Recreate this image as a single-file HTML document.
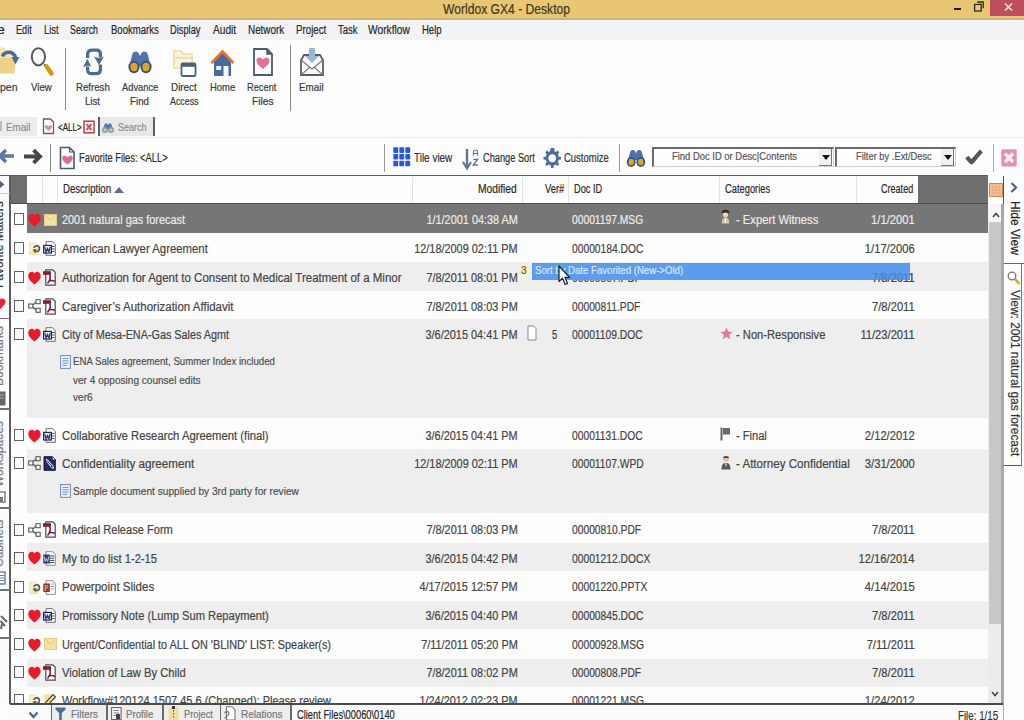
<!DOCTYPE html>
<html><head><meta charset="utf-8">
<title>Worldox GX4 - Desktop</title>
<style>
*{margin:0;padding:0;box-sizing:border-box}
html,body{width:1024px;height:720px;overflow:hidden;background:#fdfdfd;font-family:"Liberation Sans",sans-serif;color:#333}
.a{position:absolute;white-space:nowrap}
svg.a{overflow:visible}
div.a{-webkit-text-stroke:0.2px currentColor}
</style></head><body>
<div class="a" style="left:0px;top:0px;width:1024px;height:19px;background:#e8c673;"></div>
<div class="a" style="left:0px;top:18.4px;width:1024px;height:1.6px;background:#cbb17a;"></div>
<div class="a" style="left:0px;top:20px;width:1024px;height:2.2px;background:#fcf8f0;"></div>
<div class="a" style="left:443.00px;top:2.13px;font-size:14.5px;line-height:14.5px;color:#3f3825;transform:scaleX(0.8353);transform-origin:0 0;">Worldox GX4 - Desktop</div>
<div class="a" style="left:954px;top:8px;width:7px;height:2px;background:#1a1a1a;"></div>
<svg class="a" style="left:973px;top:0px" width="12" height="13" viewBox="0 0 12 13"><rect x="1.6" y="4.4" width="6.6" height="6.6" fill="none" stroke="#2a2a2a" stroke-width="1.3"/><path d="M4.2 2 H10.2 V8.2" fill="none" stroke="#2a2a2a" stroke-width="1.3"/></svg>
<div class="a" style="left:990px;top:0px;width:34px;height:16px;background:#bd4f5e;"></div>
<svg class="a" style="left:1003px;top:2px" width="11" height="10" viewBox="0 0 11 10"><path d="M2 1.5 L9 8.5 M9 1.5 L2 8.5" stroke="#f6e6e8" stroke-width="1.5"/></svg>
<div class="a" style="left:0px;top:22.2px;width:1024px;height:18.3px;background:#f3f3f5;"></div>
<div class="a" style="left:-3.50px;top:23.82px;font-size:12.5px;line-height:12.5px;color:#262626;transform:scaleX(1.1218);transform-origin:0 0;">e</div>
<div class="a" style="left:16.20px;top:23.82px;font-size:12.5px;line-height:12.5px;color:#262626;transform:scaleX(0.7333);transform-origin:0 0;">Edit</div>
<div class="a" style="left:44.00px;top:23.82px;font-size:12.5px;line-height:12.5px;color:#262626;transform:scaleX(0.7505);transform-origin:0 0;">List</div>
<div class="a" style="left:70.20px;top:23.82px;font-size:12.5px;line-height:12.5px;color:#262626;transform:scaleX(0.7069);transform-origin:0 0;">Search</div>
<div class="a" style="left:110.50px;top:23.82px;font-size:12.5px;line-height:12.5px;color:#262626;transform:scaleX(0.7628);transform-origin:0 0;">Bookmarks</div>
<div class="a" style="left:170.30px;top:23.82px;font-size:12.5px;line-height:12.5px;color:#262626;transform:scaleX(0.7439);transform-origin:0 0;">Display</div>
<div class="a" style="left:212.70px;top:23.82px;font-size:12.5px;line-height:12.5px;color:#262626;transform:scaleX(0.8140);transform-origin:0 0;">Audit</div>
<div class="a" style="left:247.60px;top:23.82px;font-size:12.5px;line-height:12.5px;color:#262626;transform:scaleX(0.7896);transform-origin:0 0;">Network</div>
<div class="a" style="left:295.60px;top:23.82px;font-size:12.5px;line-height:12.5px;color:#262626;transform:scaleX(0.7788);transform-origin:0 0;">Project</div>
<div class="a" style="left:337.80px;top:23.82px;font-size:12.5px;line-height:12.5px;color:#262626;transform:scaleX(0.7548);transform-origin:0 0;">Task</div>
<div class="a" style="left:368.10px;top:23.82px;font-size:12.5px;line-height:12.5px;color:#262626;transform:scaleX(0.8188);transform-origin:0 0;">Workflow</div>
<div class="a" style="left:421.70px;top:23.82px;font-size:12.5px;line-height:12.5px;color:#262626;transform:scaleX(0.7601);transform-origin:0 0;">Help</div>
<div class="a" style="left:0px;top:40.5px;width:1024px;height:76px;background:#fdfdfd;"></div>
<div class="a" style="left:65px;top:48px;width:1px;height:62px;background:#8a8a8a;"></div>
<div class="a" style="left:290px;top:45px;width:1px;height:66px;background:#8a8a8a;"></div>
<svg class="a" style="left:0px;top:46px" width="20" height="30" viewBox="0 0 20 30"><path d="M-4 1.5 H4 L6 4 H12 V14 H-4 Z" fill="#f5e2b0"/><path d="M-4 12 H15.5 L14.5 27.5 H-4Z" fill="#efd08a"/><path d="M2.5 10.5 C4 5 14 4 15.5 12" fill="none" stroke="#4a6a9a" stroke-width="3.6"/><path d="M11.5 11 L19.5 11 L15.5 18.5 Z" fill="#4a6a9a"/></svg>
<svg class="a" style="left:28px;top:46px" width="28" height="32" viewBox="0 0 28 32"><ellipse cx="10.4" cy="10.8" rx="6.6" ry="8.6" fill="#fbfbfb" stroke="#5a5a5a" stroke-width="2"/><path d="M16 18.5 L18.2 20" stroke="#5a5a5a" stroke-width="2"/><path d="M18.5 20.5 L23.5 27.5" stroke="#d8950f" stroke-width="4.6" stroke-linecap="round"/></svg>
<svg class="a" style="left:80px;top:48px" width="26" height="28" viewBox="0 0 26 28"><path d="M7.6 10 V6.5 C7.6 3.8 9 2.2 11.5 2.2 H16.5 C19 2.2 20.4 3.8 20.4 6.5 V9.5" fill="none" stroke="#4e6b92" stroke-width="3.3"/><path d="M13.8 8.3 Q19 11.5 24 8.6 L19 17 Z" fill="#4e6b92"/><path d="M20.4 16.5 V21.5 C20.4 24.2 19 25.6 16.5 25.6 H11.5 C9 25.6 7.6 24.2 7.6 21.5 V18.5" fill="none" stroke="#4e6b92" stroke-width="3.3"/><path d="M3 19.5 Q7.3 16.5 11.4 19 L7.3 10.8 Z" fill="#4e6b92"/></svg>
<svg class="a" style="left:127px;top:50px" width="26" height="25" viewBox="0 0 26 25"><path d="M2.5 16 L5 5 C5.5 2.5 7 1.5 9 1.5 C10.5 1.5 11.5 2.5 12 4 L13 6 L14 4 C14.5 2.5 15.5 1.5 17 1.5 C19 1.5 20.5 2.5 21 5 L23.5 16 Z" fill="#5272aa"/><ellipse cx="7" cy="17" rx="5.6" ry="6.2" fill="#3a4e88"/><ellipse cx="19" cy="17" rx="5.6" ry="6.2" fill="#3a4e88"/><ellipse cx="7" cy="17" rx="3.6" ry="4.2" fill="#dca621"/><ellipse cx="19" cy="17" rx="3.6" ry="4.2" fill="#dca621"/></svg>
<svg class="a" style="left:172px;top:50px" width="26" height="28" viewBox="0 0 26 28"><path d="M2 1 H9 L11 4 H20 V18 H2 Z" fill="#fbf4dc" stroke="#eedca0" stroke-width="1.6"/><path d="M3 8 H21" stroke="#e9d9a8" stroke-width="1.5"/><rect x="9.5" y="13.5" width="14" height="12.5" rx="1.2" fill="#fafcff" stroke="#4c5f80" stroke-width="1.8"/><rect x="9.5" y="13.5" width="14" height="3.3" fill="#4c5f80"/></svg>
<svg class="a" style="left:209px;top:49px" width="27" height="29" viewBox="0 0 27 29"><path d="M5 12 L13.5 4 L22 12 V27 H5 Z" fill="#4a6a9e"/><rect x="7.2" y="17" width="5" height="4" fill="#eaf2fb"/><rect x="14.5" y="17" width="5" height="10" fill="#f5f8fb"/><path d="M2.5 14 L13.5 2.5 L24.5 14" fill="none" stroke="#e8742a" stroke-width="2.6"/></svg>
<svg class="a" style="left:252px;top:47px" width="22" height="30" viewBox="0 0 22 30"><path d="M2 2 H15 L20 7 V28 H2 Z" fill="#f9fcff" stroke="#4c5b70" stroke-width="1.8"/><path d="M15 2 V7 H20" fill="#4c5b70" stroke="#4c5b70" stroke-width="1.5"/><path d="M11 22 C6 18 4.5 16 4.5 13.5 C4.5 11 7 10 9 11 C10 11.5 11 12.5 11 12.5 C11 12.5 12 11.5 13 11 C15 10 17.5 11 17.5 13.5 C17.5 16 16 18 11 22Z" fill="#e4718f"/></svg>
<svg class="a" style="left:299px;top:46px" width="26" height="32" viewBox="0 0 26 32"><path d="M2 14 L5 9 H21 L24 14 V29 H2 Z" fill="#fbfbfb" stroke="#5c5c5c" stroke-width="1.8"/><path d="M2 14 L13 23 L24 14" fill="none" stroke="#7a7a7a" stroke-width="1.2"/><path d="M2 29 L11 21 M24 29 L15 21" stroke="#7a7a7a" stroke-width="1.2"/><path d="M10 2 H16 V10 H20 L13 17 L6 10 H10 Z" fill="#93b8dc"/></svg>
<div class="a" style="left:-0.50px;top:81.81px;font-size:10.5px;line-height:10.5px;color:#3a3a3a;transform:scaleX(0.9982);transform-origin:0 0;">pen</div>
<div class="a" style="left:31.40px;top:81.81px;font-size:10.5px;line-height:10.5px;color:#3a3a3a;transform:scaleX(0.9212);transform-origin:0 0;">View</div>
<div class="a" style="left:75.60px;top:81.81px;font-size:10.5px;line-height:10.5px;color:#3a3a3a;transform:scaleX(0.9193);transform-origin:0 0;">Refresh</div>
<div class="a" style="left:84.60px;top:95.81px;font-size:10.5px;line-height:10.5px;color:#3a3a3a;transform:scaleX(0.9178);transform-origin:0 0;">List</div>
<div class="a" style="left:121.80px;top:81.81px;font-size:10.5px;line-height:10.5px;color:#3a3a3a;transform:scaleX(0.8881);transform-origin:0 0;">Advance</div>
<div class="a" style="left:130.00px;top:95.81px;font-size:10.5px;line-height:10.5px;color:#3a3a3a;transform:scaleX(0.9297);transform-origin:0 0;">Find</div>
<div class="a" style="left:170.70px;top:81.81px;font-size:10.5px;line-height:10.5px;color:#3a3a3a;transform:scaleX(0.9409);transform-origin:0 0;">Direct</div>
<div class="a" style="left:169.50px;top:95.81px;font-size:10.5px;line-height:10.5px;color:#3a3a3a;transform:scaleX(0.8421);transform-origin:0 0;">Access</div>
<div class="a" style="left:209.60px;top:81.81px;font-size:10.5px;line-height:10.5px;color:#3a3a3a;transform:scaleX(0.9031);transform-origin:0 0;">Home</div>
<div class="a" style="left:247.20px;top:81.81px;font-size:10.5px;line-height:10.5px;color:#3a3a3a;transform:scaleX(0.8834);transform-origin:0 0;">Recent</div>
<div class="a" style="left:251.70px;top:95.81px;font-size:10.5px;line-height:10.5px;color:#3a3a3a;transform:scaleX(0.9697);transform-origin:0 0;">Files</div>
<div class="a" style="left:299.20px;top:81.81px;font-size:10.5px;line-height:10.5px;color:#3a3a3a;transform:scaleX(0.9366);transform-origin:0 0;">Email</div>
<div class="a" style="left:0px;top:116px;width:1024px;height:22px;background:#fdfdfd;"></div>
<div class="a" style="left:0px;top:117px;width:37px;height:19px;background:#ececec;"></div>
<div class="a" style="left:0px;top:121px;width:2px;height:10px;background:#bbbbbb;"></div>
<div class="a" style="left:5.60px;top:121.51px;font-size:10.5px;line-height:10.5px;color:#8c8c8c;transform:scaleX(0.9290);transform-origin:0 0;">Email</div>
<svg class="a" style="left:42px;top:118px" width="13" height="17" viewBox="0 0 13 17"><path d="M1.5 1 H8.5 L11.5 4 V15.5 H1.5 Z" fill="#fff" stroke="#6b5a64" stroke-width="1.3"/><path d="M6.5 13 C4 11 3 10 3 8.6 C3 7.4 4.2 7 5.2 7.5 L6.5 8.5 L7.8 7.5 C8.8 7 10 7.4 10 8.6 C10 10 9 11 6.5 13Z" fill="#d98aa0"/></svg>
<div class="a" style="left:58.00px;top:121.51px;font-size:10.5px;line-height:10.5px;color:#222;transform:scaleX(0.7657);transform-origin:0 0;">&lt;ALL&gt;</div>
<svg class="a" style="left:83px;top:120px" width="12" height="14" viewBox="0 0 12 14"><rect x="1" y="1.2" width="10" height="11.6" fill="#fff" stroke="#c0444c" stroke-width="1.6"/><path d="M3.5 4 L8.5 10 M8.5 4 L3.5 10" stroke="#d9505a" stroke-width="2"/></svg>
<div class="a" style="left:98px;top:117px;width:1.6px;height:19px;background:#606060;"></div>
<div class="a" style="left:100px;top:117px;width:54px;height:19px;background:#e9e9ec;"></div>
<div class="a" style="left:153px;top:117px;width:1.6px;height:19px;background:#606060;"></div>
<svg class="a" style="left:101px;top:122px" width="14" height="12" viewBox="0 0 14 12"><path d="M2 7 L4 1.5 H6 L7 3 L8 1.5 H10 L12 7Z" fill="#5a76a8"/><circle cx="4" cy="8" r="3" fill="#8a9ab0"/><circle cx="10" cy="8" r="3" fill="#8a9ab0"/><circle cx="4" cy="8" r="1.6" fill="#cfc9a0"/><circle cx="10" cy="8" r="1.6" fill="#cfc9a0"/></svg>
<div class="a" style="left:117.60px;top:121.51px;font-size:10.5px;line-height:10.5px;color:#8c8c8c;transform:scaleX(0.8533);transform-origin:0 0;">Search</div>
<div class="a" style="left:0px;top:138px;width:1024px;height:37px;background:#fdfdfd;"></div>
<div class="a" style="left:0px;top:136.5px;width:1024px;height:1px;background:#e8e8e8;"></div>
<div class="a" style="left:0px;top:175px;width:988px;height:1.6px;background:#5d5d5d;"></div>
<svg class="a" style="left:-1px;top:149px" width="16" height="14" viewBox="0 0 16 14"><path d="M7 1 L1 7 L7 13 M1.5 7 H15" fill="none" stroke="#5b7ba6" stroke-width="3.4"/></svg>
<svg class="a" style="left:23px;top:149px" width="19" height="15" viewBox="0 0 19 15"><path d="M10.5 1.2 L17 7.5 L10.5 13.8 M16 7.5 H1" fill="none" stroke="#454545" stroke-width="3.8"/></svg>
<div class="a" style="left:50px;top:144px;width:1px;height:28px;background:#888;"></div>
<svg class="a" style="left:59px;top:146px" width="17" height="24" viewBox="0 0 17 24"><path d="M1.5 1.5 H10.5 L15 6 V22.5 H1.5 Z" fill="#fbfcff" stroke="#4a5b70" stroke-width="1.6"/><path d="M10.5 1.5 V6 H15" fill="none" stroke="#4a5b70" stroke-width="1.2"/><path d="M8.5 18.5 C4.5 15.5 3.3 14 3.3 12 C3.3 10 5.3 9.3 6.8 10 L8.5 11.2 L10.2 10 C11.7 9.3 13.7 10 13.7 12 C13.7 14 12.5 15.5 8.5 18.5Z" fill="#e26b8e"/></svg>
<div class="a" style="left:79.40px;top:152.04px;font-size:12px;line-height:12px;color:#2c2c2c;transform:scaleX(0.7768);transform-origin:0 0;">Favorite Files: &lt;ALL&gt;</div>
<div class="a" style="left:384px;top:144px;width:1px;height:28px;background:#999;"></div>
<svg class="a" style="left:393px;top:147px" width="18" height="20" viewBox="0 0 18 20"><rect x="0.3" y="0.3" width="4.9" height="5.6" rx="0.8" fill="#2459d8"/><rect x="6.3" y="0.3" width="4.9" height="5.6" rx="0.8" fill="#2459d8"/><rect x="12.3" y="0.3" width="4.9" height="5.6" rx="0.8" fill="#2459d8"/><rect x="0.3" y="7.0" width="4.9" height="5.6" rx="0.8" fill="#2459d8"/><rect x="6.3" y="7.0" width="4.9" height="5.6" rx="0.8" fill="#2459d8"/><rect x="12.3" y="7.0" width="4.9" height="5.6" rx="0.8" fill="#2459d8"/><rect x="0.3" y="13.700000000000001" width="4.9" height="5.6" rx="0.8" fill="#2459d8"/><rect x="6.3" y="13.700000000000001" width="4.9" height="5.6" rx="0.8" fill="#2459d8"/><rect x="12.3" y="13.700000000000001" width="4.9" height="5.6" rx="0.8" fill="#2459d8"/></svg>
<div class="a" style="left:413.50px;top:151.74px;font-size:12px;line-height:12px;color:#333;transform:scaleX(0.8284);transform-origin:0 0;">Tile view</div>
<svg class="a" style="left:462px;top:148px" width="18" height="22" viewBox="0 0 18 22"><path d="M5 1 V18.5" stroke="#5b7696" stroke-width="2.4"/><path d="M1 14 L5 20.5 L9 14" fill="none" stroke="#5b7696" stroke-width="2.2"/><path d="M11.5 7.5 V3.5 C11.5 1.5 15.5 1.5 15.5 3.5 V7.5 M11.5 5.5 H15.5" fill="none" stroke="#5b7696" stroke-width="1.2"/><path d="M11.3 11.5 H15.7 L11.3 17 H15.9" fill="none" stroke="#5b7696" stroke-width="1.3"/></svg>
<div class="a" style="left:482.60px;top:151.84px;font-size:12px;line-height:12px;color:#333;transform:scaleX(0.7701);transform-origin:0 0;">Change Sort</div>
<svg class="a" style="left:543px;top:147px" width="20" height="22" viewBox="0 0 20 22"><g transform="translate(9.5 11)"><path d="M-1.8 -10 H1.8 L2.4 -6.5 L-2.4 -6.5 Z" fill="#4e6c9a"/></g></svg>
<div class="a" style="left:564.40px;top:151.84px;font-size:12px;line-height:12px;color:#333;transform:scaleX(0.7903);transform-origin:0 0;">Customize</div>
<div class="a" style="left:619px;top:144px;width:1px;height:28px;background:#999;"></div>
<svg class="a" style="left:626px;top:149px" width="20" height="19" viewBox="0 0 20 19"><path d="M2 11 L4 3.5 C4.5 1.5 5.5 1 7 1 C8.2 1 9 1.8 9.4 3 L10 4.5 L10.6 3 C11 1.8 11.8 1 13 1 C14.5 1 15.5 1.5 16 3.5 L18 11 Z" fill="#5272aa"/><ellipse cx="5.2" cy="13" rx="4.4" ry="5" fill="#3a4e88"/><ellipse cx="14.8" cy="13" rx="4.4" ry="5" fill="#3a4e88"/><ellipse cx="5.2" cy="13" rx="2.7" ry="3.2" fill="#dca621"/><ellipse cx="14.8" cy="13" rx="2.7" ry="3.2" fill="#dca621"/></svg>
<svg class="a" style="left:543px;top:147px" width="18.5" height="22.5" viewBox="0 0 20 22" preserveAspectRatio="none"><path d="M17.03 9.46 L19.51 9.68 L19.51 12.32 L17.03 12.54 L16.06 14.88 L17.65 16.79 L15.79 18.65 L13.88 17.06 L11.54 18.03 L11.32 20.51 L8.68 20.51 L8.46 18.03 L6.12 17.06 L4.21 18.65 L2.35 16.79 L3.94 14.88 L2.97 12.54 L0.49 12.32 L0.49 9.68 L2.97 9.46 L3.94 7.12 L2.35 5.21 L4.21 3.35 L6.12 4.94 L8.46 3.97 L8.68 1.49 L11.32 1.49 L11.54 3.97 L13.88 4.94 L15.79 3.35 L17.65 5.21 L16.06 7.12Z" fill="#4f6d9b"/><circle cx="10" cy="11" r="4" fill="#fdfdfd"/></svg>
<div class="a" style="left:652px;top:147px;width:182px;height:20px;background:#fdfdfd;border-top:2px solid #6a6a6a;border-left:2px solid #6a6a6a;border-bottom:1px solid #d0d0d0;border-right:1px solid #d0d0d0"></div>
<div class="a" style="left:819px;top:149px;width:13px;height:17px;background:#f0f0f0;border-right:1px solid #777;border-bottom:1px solid #777"></div>
<svg class="a" style="left:822px;top:155px" width="8" height="5" viewBox="0 0 8 5"><path d="M0 0 H8 L4 5Z" fill="#111"/></svg>
<div class="a" style="left:672.30px;top:151.19px;font-size:11px;line-height:11px;color:#555;transform:scaleX(0.8566);transform-origin:0 0;">Find Doc ID or Desc|Contents</div>
<div class="a" style="left:835px;top:147px;width:121px;height:20px;background:#fdfdfd;border-top:2px solid #6a6a6a;border-left:2px solid #6a6a6a;border-bottom:1px solid #d0d0d0;border-right:1px solid #d0d0d0"></div>
<div class="a" style="left:941px;top:149px;width:13px;height:17px;background:#f0f0f0;border-right:1px solid #777;border-bottom:1px solid #777"></div>
<svg class="a" style="left:944px;top:155px" width="8" height="5" viewBox="0 0 8 5"><path d="M0 0 H8 L4 5Z" fill="#111"/></svg>
<div class="a" style="left:855.60px;top:151.19px;font-size:11px;line-height:11px;color:#555;transform:scaleX(0.8493);transform-origin:0 0;">Filter by .Ext/Desc</div>
<svg class="a" style="left:965px;top:148px" width="18" height="18" viewBox="0 0 18 18"><path d="M1.8 9.2 L6.5 14.3 L16.3 2.8" fill="none" stroke="#555" stroke-width="4.2" stroke-linejoin="round"/></svg>
<div class="a" style="left:993px;top:144px;width:1px;height:28px;background:#aaa;"></div>
<svg class="a" style="left:1000.5px;top:149px" width="16" height="18" viewBox="0 0 16 18"><rect x="0.3" y="0.3" width="15.4" height="17.2" rx="1.5" fill="#e48fb2"/><path d="M4 4.5 L12 13 M12 4.5 L4 13" stroke="#fbeaf2" stroke-width="3.4"/></svg>
<div class="a" style="left:0px;top:176px;width:10px;height:528px;background:#fbfbfb;"></div>
<div class="a" style="left:9px;top:176px;width:2.2px;height:528px;background:#5e5e5e;"></div>
<svg class="a" style="left:0px;top:180px" width="6" height="9" viewBox="0 0 6 9"><path d="M-1 0 L4.5 4.5 L-1 9 Z" fill="#56657e"/></svg>
<div class="a" style="left:0px;top:192.5px;width:10px;height:1px;background:#cfcfcf;"></div>
<div class="a" style="left:0px;top:317.75px;width:10px;height:1.5px;background:#707070;"></div>
<div class="a" style="left:0px;top:408.25px;width:10px;height:1.5px;background:#707070;"></div>
<div class="a" style="left:0px;top:507.25px;width:10px;height:1.5px;background:#707070;"></div>
<div class="a" style="left:0px;top:589.25px;width:10px;height:1.5px;background:#707070;"></div>
<div class="a" style="left:0px;top:637.25px;width:10px;height:1.5px;background:#707070;"></div>
<div class="a" style="left:-6.7px;top:288px;transform:rotate(-90deg);transform-origin:0 0;font-size:12px;line-height:12px;color:#333">Favorite Matters</div>
<div class="a" style="left:-6.7px;top:386px;transform:rotate(-90deg);transform-origin:0 0;font-size:12px;line-height:12px;color:#7a7a7a">Bookmarks</div>
<div class="a" style="left:-6.7px;top:487px;transform:rotate(-90deg);transform-origin:0 0;font-size:12px;line-height:12px;color:#7a7a7a">Workspaces</div>
<div class="a" style="left:-6.7px;top:567px;transform:rotate(-90deg);transform-origin:0 0;font-size:12px;line-height:12px;color:#7a7a7a">Cabinets</div>
<svg class="a" style="left:0px;top:297px" width="6" height="13" viewBox="0 0 6 13"><path d="M0 12.5 C-3 9 -5 7 -5 4.5 C-5 2 -3 1 -1 1.5 L0 2.5 L1 1.5 C3 1 5.5 2 5.5 4.5 C5.5 7 3 9 0 12.5Z" fill="#e8203a"/></svg>
<svg class="a" style="left:0px;top:391px" width="7" height="15" viewBox="0 0 7 15"><rect x="-2" y="0.5" width="7.5" height="14" fill="#666"/><path d="M-1 4 H4 M-1 7 H4" stroke="#aaa" stroke-width="1"/></svg>
<svg class="a" style="left:0px;top:491px" width="7" height="12" viewBox="0 0 7 12"><rect x="-2" y="1" width="7" height="10" fill="#fff" stroke="#777" stroke-width="1.4"/><rect x="-2" y="6" width="5" height="5" fill="#777"/></svg>
<svg class="a" style="left:0px;top:571px" width="7" height="14" viewBox="0 0 7 14"><rect x="-2" y="1" width="7" height="12" fill="#fff" stroke="#6a7aa0" stroke-width="1.4"/><path d="M-1 4.5 H4 M-1 7 H4 M-1 9.5 H4" stroke="#6a7aa0" stroke-width="1"/></svg>
<svg class="a" style="left:0px;top:614px" width="9" height="17" viewBox="0 0 9 17"><path d="M1 2 L7 8 M0.5 7 L5 12 M2 10 L1 15" stroke="#666" stroke-width="2"/></svg>
<div class="a" style="left:11px;top:176px;width:977px;height:28px;background:#fdfdfd;"></div>
<div class="a" style="left:11px;top:176px;width:16px;height:28px;background:#6e6e6e;"></div>
<div class="a" style="left:918px;top:176px;width:70px;height:28px;background:#6e6e6e;"></div>
<div class="a" style="left:42px;top:177px;width:1px;height:26px;background:#e2e2e2;"></div>
<div class="a" style="left:57px;top:177px;width:1px;height:26px;background:#e2e2e2;"></div>
<div class="a" style="left:412px;top:177px;width:1px;height:26px;background:#e2e2e2;"></div>
<div class="a" style="left:521.5px;top:177px;width:1px;height:26px;background:#e2e2e2;"></div>
<div class="a" style="left:568px;top:177px;width:1px;height:26px;background:#e2e2e2;"></div>
<div class="a" style="left:719px;top:177px;width:1px;height:26px;background:#e2e2e2;"></div>
<div class="a" style="left:856px;top:177px;width:1px;height:26px;background:#e2e2e2;"></div>
<div class="a" style="left:11px;top:202.5px;width:977px;height:1.5px;background:#4e4e4e;"></div>
<div class="a" style="left:63.20px;top:183.14px;font-size:12px;line-height:12px;color:#2a2a2a;transform:scaleX(0.7996);transform-origin:0 0;">Description</div>
<svg class="a" style="left:114px;top:187px" width="10" height="6" viewBox="0 0 10 6"><path d="M0 6 L5 0 L10 6Z" fill="#5a7092"/></svg>
<div class="a" style="left:477.50px;top:183.14px;font-size:12px;line-height:12px;color:#2a2a2a;transform:scaleX(0.8543);transform-origin:0 0;">Modified</div>
<div class="a" style="left:545.20px;top:183.14px;font-size:12px;line-height:12px;color:#2a2a2a;transform:scaleX(0.7777);transform-origin:0 0;">Ver#</div>
<div class="a" style="left:574.00px;top:183.14px;font-size:12px;line-height:12px;color:#2a2a2a;transform:scaleX(0.7687);transform-origin:0 0;">Doc ID</div>
<div class="a" style="left:724.60px;top:183.14px;font-size:12px;line-height:12px;color:#2a2a2a;transform:scaleX(0.7772);transform-origin:0 0;">Categories</div>
<div class="a" style="left:880.80px;top:183.14px;font-size:12px;line-height:12px;color:#2a2a2a;transform:scaleX(0.7540);transform-origin:0 0;">Created</div>
<svg class="a" style="left:989px;top:183px" width="14" height="14" viewBox="0 0 14 14"><rect x="0.5" y="0.5" width="13" height="13" fill="#f4c49a" stroke="#c98a55" stroke-width="1"/><path d="M4 1 V13" stroke="#e8a070" stroke-width="0.7"/><path d="M7 1 V13" stroke="#e8a070" stroke-width="0.7"/><path d="M10 1 V13" stroke="#e8a070" stroke-width="0.7"/><path d="M1 4 H13" stroke="#e8a070" stroke-width="0.7"/><path d="M1 7 H13" stroke="#e8a070" stroke-width="0.7"/><path d="M1 10 H13" stroke="#e8a070" stroke-width="0.7"/></svg>
<div class="a" style="left:1003px;top:176px;width:1px;height:28px;background:#555;"></div>
<svg width="0" height="0" style="position:absolute"><defs>
<symbol id="heart" viewBox="0 0 13 14"><path d="M6.5 13.5 C2 10 0.3 7.8 0.3 5 C0.3 2.2 2.2 0.8 4 0.8 C5.2 0.8 6 1.5 6.5 2.4 C7 1.5 7.8 0.8 9 0.8 C10.8 0.8 12.7 2.2 12.7 5 C12.7 7.8 11 10 6.5 13.5Z" fill="#e61c2e"/></symbol>
<symbol id="env" viewBox="0 0 13 12"><rect x="0.5" y="0.5" width="12" height="11" fill="#f3e2a4" stroke="#e2cc86" stroke-width="1"/><path d="M0.8 1 L6.5 6.5 L12.2 1" fill="none" stroke="#d9c07a" stroke-width="0.9"/></symbol>
<symbol id="word" viewBox="0 0 13 15"><path d="M3 0.7 H9.5 L12.3 3.5 V14.3 H3 Z" fill="#fff" stroke="#6a6a6a" stroke-width="1"/><path d="M9 5.5 H11.5 M9 8 H11.5 M9 10.5 H11.5" stroke="#555" stroke-width="1.1"/><rect x="0.6" y="4.4" width="7.8" height="7.6" fill="#eef1fa" stroke="#1e2750" stroke-width="1.2"/><path d="M1.8 5.8 L3 10.8 L4.5 7.5 L6 10.8 L7.2 5.8" fill="none" stroke="#26367a" stroke-width="1.3"/></symbol>
<symbol id="pdf" viewBox="0 0 13 17"><path d="M2.8 0.9 H9.8 L12.2 3.3 V16.1 H2.8 Z" fill="#fff" stroke="#4a4a4a" stroke-width="1.2"/><rect x="0" y="2.2" width="8" height="3.6" fill="#861c3c"/><path d="M6.5 5.5 C8.5 8.5 7 11 4.5 14.5 M5.5 12.5 C8 11 10 11.5 12 12.5" fill="none" stroke="#7c1a38" stroke-width="1.5"/></symbol>
<symbol id="share" viewBox="0 0 13 14"><rect x="0.7" y="5" width="4.2" height="4" fill="#fff" stroke="#5a5a5a" stroke-width="1.1"/><rect x="8" y="0.7" width="4.2" height="4" fill="#fff" stroke="#5a5a5a" stroke-width="1.1"/><rect x="8" y="9.3" width="4.2" height="4" fill="#fff" stroke="#5a5a5a" stroke-width="1.1"/><path d="M4.9 6 L8 3 M4.9 8 L8 11" fill="none" stroke="#5a5a5a" stroke-width="1.1"/></symbol>
<symbol id="chk" viewBox="0 0 12 13"><path d="M0.8 1 H6.5 L9 3.5 V12.5 H0.8 Z" fill="#faf0cc" stroke="#efe0b0" stroke-width="1"/><path d="M3 8.5 L4 11.5 L6.5 12 L7 9" fill="#e8d490"/><path d="M5 6 C5 3 10.5 3 10.5 6.5 C10.5 9.5 7.5 10 6 9" fill="none" stroke="#555" stroke-width="1.6"/><path d="M3.5 7.5 L6.5 11 L7.5 7Z" fill="#555"/></symbol>
<symbol id="wpd" viewBox="0 0 13 15"><path d="M1 0.7 H9.5 L12.3 3.5 V14.3 H1 Z" fill="#232c5c" stroke="#151a3a" stroke-width="1"/><path d="M9.6 0.9 V3.4 H12.1 Z" fill="#e8eaf4"/><path d="M2.5 2.5 L5 3.8 L10.5 10 L11 13 L8.2 12 L3.5 5.5 Z" fill="#dde2f0"/><path d="M4 4.5 L9.5 11" stroke="#232c5c" stroke-width="1"/><circle cx="8.6" cy="10.6" r="0.9" fill="#232c5c"/></symbol>
<symbol id="docx" viewBox="0 0 13 15"><path d="M3 0.7 H9.5 L12.3 3.5 V14.3 H3 Z" fill="#fff" stroke="#8a8a8a" stroke-width="1"/><path d="M6.5 5 H11.3 M6.5 7.2 H11.3 M6.5 9.4 H11.3 M6.5 11.6 H11.3" stroke="#444" stroke-width="1"/><rect x="0.3" y="3.5" width="6.5" height="9" fill="#2c3e70"/><path d="M1.2 5.5 L2.3 10.5 L3.5 7.5 L4.7 10.5 L5.8 5.5" fill="none" stroke="#c8d8f0" stroke-width="0.9"/></symbol>
<symbol id="pptx" viewBox="0 0 13 15"><path d="M3 0.7 H9.5 L12.3 3.5 V14.3 H3 Z" fill="#fff" stroke="#8a8a8a" stroke-width="1"/><path d="M8 4 H11 M8 6.5 H11 M8 9 H11" stroke="#999" stroke-width="1"/><rect x="0.3" y="3.5" width="6.5" height="8.5" fill="#9a3420"/><path d="M2.3 11 V5.5 H3.8 C5.2 5.5 5.2 8.2 3.8 8.2 H2.3" fill="none" stroke="#f0b8a0" stroke-width="1"/></symbol>
<symbol id="pencil" viewBox="0 0 13 14"><path d="M0.8 1 H8 V13 H0.8Z" fill="#f5e5b0"/><path d="M2 13 L3 9 L10 1.5 L12.5 4 L5.5 11.5 Z" fill="#f1dd9a" stroke="#444" stroke-width="1.2"/></symbol>
<symbol id="pagesm" viewBox="0 0 10 16"><path d="M1 1 H6.5 L9 3.5 V15 H1 Z" fill="#fff" stroke="#888" stroke-width="1"/></symbol>
<symbol id="notes" viewBox="0 0 11 14"><rect x="0.6" y="0.6" width="9.8" height="12.8" fill="#eef3fb" stroke="#6a8cc0" stroke-width="1"/><path d="M2.5 3.5 H8.5 M2.5 5.8 H8.5 M2.5 8.1 H8.5 M2.5 10.4 H7" stroke="#6a8cc0" stroke-width="0.9"/></symbol>
</defs></svg>
<div class="a" style="left:27px;top:204.3px;width:961px;height:28.899999999999977px;background:#767676;"></div>
<div class="a" style="left:27px;top:233.2px;width:961px;height:28.30000000000001px;background:#fdfdfd;"></div>
<div class="a" style="left:27px;top:261.5px;width:961px;height:29.0px;background:#eeeeee;"></div>
<div class="a" style="left:27px;top:290.5px;width:961px;height:28.5px;background:#fdfdfd;"></div>
<div class="a" style="left:27px;top:319px;width:961px;height:99.39999999999998px;background:#eeeeee;"></div>
<div class="a" style="left:27px;top:418.4px;width:961px;height:31.0px;background:#fdfdfd;"></div>
<div class="a" style="left:27px;top:449.4px;width:961px;height:63.700000000000045px;background:#eeeeee;"></div>
<div class="a" style="left:27px;top:513.1px;width:961px;height:29.899999999999977px;background:#fdfdfd;"></div>
<div class="a" style="left:27px;top:543px;width:961px;height:28.200000000000045px;background:#eeeeee;"></div>
<div class="a" style="left:27px;top:571.2px;width:961px;height:30.0px;background:#fdfdfd;"></div>
<div class="a" style="left:27px;top:601.2px;width:961px;height:28.199999999999932px;background:#eeeeee;"></div>
<div class="a" style="left:27px;top:629.4px;width:961px;height:29.899999999999977px;background:#fdfdfd;"></div>
<div class="a" style="left:27px;top:659.3px;width:961px;height:28.200000000000045px;background:#eeeeee;"></div>
<div class="a" style="left:27px;top:687.5px;width:961px;height:16.5px;background:#fdfdfd;"></div>
<div class="a" style="left:14px;top:213.4px;width:10px;height:12px;background:#fff;border:1.1px solid #626262"></div>
<svg class="a" style="left:28px;top:212.9px" width="13" height="14"><use href="#heart"/></svg>
<svg class="a" style="left:44px;top:213.70000000000002px" width="13" height="12"><use href="#env"/></svg>
<div class="a" style="left:61.50px;top:214.12px;font-size:12.5px;line-height:12.5px;color:#ececec;transform:scaleX(0.8719);transform-origin:0 0;">2001 natural gas forecast</div>
<div class="a" style="left:413.05px;top:214.12px;font-size:12.5px;line-height:12.5px;color:#ececec;transform:scaleX(0.8720);transform-origin:100% 0;">1/1/2001 04:38 AM</div>
<div class="a" style="left:572.30px;top:214.12px;font-size:12.5px;line-height:12.5px;color:#ececec;transform:scaleX(0.8220);transform-origin:0 0;">00001197.MSG</div>
<div class="a" style="left:736.20px;top:214.12px;font-size:12.5px;line-height:12.5px;color:#ececec;transform:scaleX(0.8976);transform-origin:0 0;">- Expert Witness</div>
<div class="a" style="left:865.83px;top:214.12px;font-size:12.5px;line-height:12.5px;color:#ececec;transform:scaleX(0.8950);transform-origin:100% 0;">1/1/2001</div>
<div class="a" style="left:14px;top:242.4px;width:10px;height:12px;background:#fff;border:1.1px solid #626262"></div>
<svg class="a" style="left:29px;top:242.20000000000002px" width="12" height="13"><use href="#chk"/></svg>
<svg class="a" style="left:43px;top:241.20000000000002px" width="13" height="15"><use href="#word"/></svg>
<div class="a" style="left:61.50px;top:243.12px;font-size:12.5px;line-height:12.5px;color:#444;transform:scaleX(0.9084);transform-origin:0 0;">American Lawyer Agreement</div>
<div class="a" style="left:399.38px;top:243.12px;font-size:12.5px;line-height:12.5px;color:#444;transform:scaleX(0.8720);transform-origin:100% 0;">12/18/2009 02:11 PM</div>
<div class="a" style="left:572.30px;top:243.12px;font-size:12.5px;line-height:12.5px;color:#444;transform:scaleX(0.8220);transform-origin:0 0;">00000184.DOC</div>
<div class="a" style="left:858.89px;top:243.12px;font-size:12.5px;line-height:12.5px;color:#444;transform:scaleX(0.8950);transform-origin:100% 0;">1/17/2006</div>
<div class="a" style="left:14px;top:271.09999999999997px;width:10px;height:12px;background:#fff;border:1.1px solid #626262"></div>
<svg class="a" style="left:28px;top:270.59999999999997px" width="13" height="14"><use href="#heart"/></svg>
<svg class="a" style="left:43px;top:268.9px" width="13" height="17"><use href="#pdf"/></svg>
<div class="a" style="left:61.50px;top:271.82px;font-size:12.5px;line-height:12.5px;color:#444;transform:scaleX(0.9184);transform-origin:0 0;">Authorization for Agent to Consent to Medical Treatment of a Minor</div>
<div class="a" style="left:413.28px;top:271.82px;font-size:12.5px;line-height:12.5px;color:#444;transform:scaleX(0.8720);transform-origin:100% 0;">7/8/2011 08:01 PM</div>
<div class="a" style="left:572.30px;top:271.82px;font-size:12.5px;line-height:12.5px;color:#444;transform:scaleX(0.8220);transform-origin:0 0;">00000807.PDF</div>
<div class="a" style="left:866.77px;top:271.82px;font-size:12.5px;line-height:12.5px;color:#444;transform:scaleX(0.8950);transform-origin:100% 0;">7/8/2011</div>
<div class="a" style="left:14px;top:299.79999999999995px;width:10px;height:12px;background:#fff;border:1.1px solid #626262"></div>
<svg class="a" style="left:28px;top:299.09999999999997px" width="13" height="14"><use href="#share"/></svg>
<svg class="a" style="left:43px;top:297.59999999999997px" width="13" height="17"><use href="#pdf"/></svg>
<div class="a" style="left:61.50px;top:300.52px;font-size:12.5px;line-height:12.5px;color:#444;transform:scaleX(0.9210);transform-origin:0 0;">Caregiver’s Authorization Affidavit</div>
<div class="a" style="left:413.28px;top:300.52px;font-size:12.5px;line-height:12.5px;color:#444;transform:scaleX(0.8720);transform-origin:100% 0;">7/8/2011 08:03 PM</div>
<div class="a" style="left:572.30px;top:300.52px;font-size:12.5px;line-height:12.5px;color:#444;transform:scaleX(0.8220);transform-origin:0 0;">00000811.PDF</div>
<div class="a" style="left:866.77px;top:300.52px;font-size:12.5px;line-height:12.5px;color:#444;transform:scaleX(0.8950);transform-origin:100% 0;">7/8/2011</div>
<div class="a" style="left:14px;top:328.29999999999995px;width:10px;height:12px;background:#fff;border:1.1px solid #626262"></div>
<svg class="a" style="left:28px;top:327.79999999999995px" width="13" height="14"><use href="#heart"/></svg>
<svg class="a" style="left:43px;top:327.09999999999997px" width="13" height="15"><use href="#word"/></svg>
<div class="a" style="left:61.50px;top:329.02px;font-size:12.5px;line-height:12.5px;color:#444;transform:scaleX(0.8647);transform-origin:0 0;">City of Mesa-ENA-Gas Sales Agmt</div>
<div class="a" style="left:412.36px;top:329.02px;font-size:12.5px;line-height:12.5px;color:#444;transform:scaleX(0.8720);transform-origin:100% 0;">3/6/2015 04:41 PM</div>
<div class="a" style="left:572.30px;top:329.02px;font-size:12.5px;line-height:12.5px;color:#444;transform:scaleX(0.8220);transform-origin:0 0;">00001109.DOC</div>
<div class="a" style="left:736.20px;top:329.02px;font-size:12.5px;line-height:12.5px;color:#444;transform:scaleX(0.8936);transform-origin:0 0;">- Non-Responsive</div>
<div class="a" style="left:853.78px;top:329.02px;font-size:12.5px;line-height:12.5px;color:#444;transform:scaleX(0.8950);transform-origin:100% 0;">11/23/2011</div>
<div class="a" style="left:14px;top:429.09999999999997px;width:10px;height:12px;background:#fff;border:1.1px solid #626262"></div>
<svg class="a" style="left:28px;top:428.59999999999997px" width="13" height="14"><use href="#heart"/></svg>
<svg class="a" style="left:43px;top:427.9px" width="13" height="15"><use href="#word"/></svg>
<div class="a" style="left:61.50px;top:429.82px;font-size:12.5px;line-height:12.5px;color:#444;transform:scaleX(0.9033);transform-origin:0 0;">Collaborative Research Agreement (final)</div>
<div class="a" style="left:412.36px;top:429.82px;font-size:12.5px;line-height:12.5px;color:#444;transform:scaleX(0.8720);transform-origin:100% 0;">3/6/2015 04:41 PM</div>
<div class="a" style="left:572.30px;top:429.82px;font-size:12.5px;line-height:12.5px;color:#444;transform:scaleX(0.8220);transform-origin:0 0;">00001131.DOC</div>
<div class="a" style="left:736.20px;top:429.82px;font-size:12.5px;line-height:12.5px;color:#444;transform:scaleX(0.8867);transform-origin:0 0;">- Final</div>
<div class="a" style="left:858.89px;top:429.82px;font-size:12.5px;line-height:12.5px;color:#444;transform:scaleX(0.8950);transform-origin:100% 0;">2/12/2012</div>
<div class="a" style="left:14px;top:457.09999999999997px;width:10px;height:12px;background:#fff;border:1.1px solid #626262"></div>
<svg class="a" style="left:28px;top:456.4px" width="13" height="14"><use href="#share"/></svg>
<svg class="a" style="left:43px;top:455.9px" width="13" height="15"><use href="#wpd"/></svg>
<div class="a" style="left:61.50px;top:457.82px;font-size:12.5px;line-height:12.5px;color:#444;transform:scaleX(0.9330);transform-origin:0 0;">Confidentiality agreement</div>
<div class="a" style="left:399.38px;top:457.82px;font-size:12.5px;line-height:12.5px;color:#444;transform:scaleX(0.8720);transform-origin:100% 0;">12/18/2009 02:11 PM</div>
<div class="a" style="left:572.30px;top:457.82px;font-size:12.5px;line-height:12.5px;color:#444;transform:scaleX(0.8220);transform-origin:0 0;">00001107.WPD</div>
<div class="a" style="left:736.20px;top:457.82px;font-size:12.5px;line-height:12.5px;color:#444;transform:scaleX(0.9252);transform-origin:0 0;">- Attorney Confidential</div>
<div class="a" style="left:858.89px;top:457.82px;font-size:12.5px;line-height:12.5px;color:#444;transform:scaleX(0.8950);transform-origin:100% 0;">3/31/2000</div>
<div class="a" style="left:14px;top:523.6px;width:10px;height:12px;background:#fff;border:1.1px solid #626262"></div>
<svg class="a" style="left:28px;top:522.9px" width="13" height="14"><use href="#share"/></svg>
<svg class="a" style="left:43px;top:521.4px" width="13" height="17"><use href="#pdf"/></svg>
<div class="a" style="left:61.50px;top:524.32px;font-size:12.5px;line-height:12.5px;color:#444;transform:scaleX(0.8861);transform-origin:0 0;">Medical Release Form</div>
<div class="a" style="left:413.28px;top:524.32px;font-size:12.5px;line-height:12.5px;color:#444;transform:scaleX(0.8720);transform-origin:100% 0;">7/8/2011 08:03 PM</div>
<div class="a" style="left:572.30px;top:524.32px;font-size:12.5px;line-height:12.5px;color:#444;transform:scaleX(0.8220);transform-origin:0 0;">00000810.PDF</div>
<div class="a" style="left:866.77px;top:524.32px;font-size:12.5px;line-height:12.5px;color:#444;transform:scaleX(0.8950);transform-origin:100% 0;">7/8/2011</div>
<div class="a" style="left:14px;top:551.8000000000001px;width:10px;height:12px;background:#fff;border:1.1px solid #626262"></div>
<svg class="a" style="left:28px;top:551.3000000000001px" width="13" height="14"><use href="#heart"/></svg>
<svg class="a" style="left:43px;top:550.6px" width="13" height="15"><use href="#docx"/></svg>
<div class="a" style="left:61.50px;top:552.52px;font-size:12.5px;line-height:12.5px;color:#444;transform:scaleX(0.8937);transform-origin:0 0;">My to do list 1-2-15</div>
<div class="a" style="left:412.36px;top:552.52px;font-size:12.5px;line-height:12.5px;color:#444;transform:scaleX(0.8720);transform-origin:100% 0;">3/6/2015 04:42 PM</div>
<div class="a" style="left:572.30px;top:552.52px;font-size:12.5px;line-height:12.5px;color:#444;transform:scaleX(0.8220);transform-origin:0 0;">00001212.DOCX</div>
<div class="a" style="left:851.94px;top:552.52px;font-size:12.5px;line-height:12.5px;color:#444;transform:scaleX(0.8950);transform-origin:100% 0;">12/16/2014</div>
<div class="a" style="left:14px;top:580.7px;width:10px;height:12px;background:#fff;border:1.1px solid #626262"></div>
<svg class="a" style="left:29px;top:580.5px" width="12" height="13"><use href="#chk"/></svg>
<svg class="a" style="left:43px;top:579.5px" width="13" height="15"><use href="#pptx"/></svg>
<div class="a" style="left:61.50px;top:581.42px;font-size:12.5px;line-height:12.5px;color:#444;transform:scaleX(0.9214);transform-origin:0 0;">Powerpoint Slides</div>
<div class="a" style="left:405.41px;top:581.42px;font-size:12.5px;line-height:12.5px;color:#444;transform:scaleX(0.8720);transform-origin:100% 0;">4/17/2015 12:57 PM</div>
<div class="a" style="left:572.30px;top:581.42px;font-size:12.5px;line-height:12.5px;color:#444;transform:scaleX(0.8220);transform-origin:0 0;">00001220.PPTX</div>
<div class="a" style="left:858.89px;top:581.42px;font-size:12.5px;line-height:12.5px;color:#444;transform:scaleX(0.8950);transform-origin:100% 0;">4/14/2015</div>
<div class="a" style="left:14px;top:609.1px;width:10px;height:12px;background:#fff;border:1.1px solid #626262"></div>
<svg class="a" style="left:28px;top:608.6px" width="13" height="14"><use href="#heart"/></svg>
<svg class="a" style="left:43px;top:607.9px" width="13" height="15"><use href="#word"/></svg>
<div class="a" style="left:61.50px;top:609.82px;font-size:12.5px;line-height:12.5px;color:#444;transform:scaleX(0.8913);transform-origin:0 0;">Promissory Note (Lump Sum Repayment)</div>
<div class="a" style="left:412.36px;top:609.82px;font-size:12.5px;line-height:12.5px;color:#444;transform:scaleX(0.8720);transform-origin:100% 0;">3/6/2015 04:40 PM</div>
<div class="a" style="left:572.30px;top:609.82px;font-size:12.5px;line-height:12.5px;color:#444;transform:scaleX(0.8220);transform-origin:0 0;">00000845.DOC</div>
<div class="a" style="left:866.77px;top:609.82px;font-size:12.5px;line-height:12.5px;color:#444;transform:scaleX(0.8950);transform-origin:100% 0;">7/8/2011</div>
<div class="a" style="left:14px;top:638.0px;width:10px;height:12px;background:#fff;border:1.1px solid #626262"></div>
<svg class="a" style="left:28px;top:637.5px" width="13" height="14"><use href="#heart"/></svg>
<svg class="a" style="left:44px;top:638.3px" width="13" height="12"><use href="#env"/></svg>
<div class="a" style="left:61.50px;top:638.72px;font-size:12.5px;line-height:12.5px;color:#444;transform:scaleX(0.8696);transform-origin:0 0;">Urgent/Confidential to ALL ON 'BLIND' LIST: Speaker(s)</div>
<div class="a" style="left:407.27px;top:638.72px;font-size:12.5px;line-height:12.5px;color:#444;transform:scaleX(0.8720);transform-origin:100% 0;">7/11/2011 05:20 PM</div>
<div class="a" style="left:572.30px;top:638.72px;font-size:12.5px;line-height:12.5px;color:#444;transform:scaleX(0.8220);transform-origin:0 0;">00000928.MSG</div>
<div class="a" style="left:860.73px;top:638.72px;font-size:12.5px;line-height:12.5px;color:#444;transform:scaleX(0.8950);transform-origin:100% 0;">7/11/2011</div>
<div class="a" style="left:14px;top:666.1px;width:10px;height:12px;background:#fff;border:1.1px solid #626262"></div>
<svg class="a" style="left:28px;top:665.6px" width="13" height="14"><use href="#heart"/></svg>
<svg class="a" style="left:43px;top:663.9px" width="13" height="17"><use href="#pdf"/></svg>
<div class="a" style="left:61.50px;top:666.82px;font-size:12.5px;line-height:12.5px;color:#444;transform:scaleX(0.8968);transform-origin:0 0;">Violation of Law By Child</div>
<div class="a" style="left:413.28px;top:666.82px;font-size:12.5px;line-height:12.5px;color:#444;transform:scaleX(0.8720);transform-origin:100% 0;">7/8/2011 08:02 PM</div>
<div class="a" style="left:572.30px;top:666.82px;font-size:12.5px;line-height:12.5px;color:#444;transform:scaleX(0.8220);transform-origin:0 0;">00000808.PDF</div>
<div class="a" style="left:866.77px;top:666.82px;font-size:12.5px;line-height:12.5px;color:#444;transform:scaleX(0.8950);transform-origin:100% 0;">7/8/2011</div>
<div class="a" style="left:14px;top:693.9px;width:10px;height:12px;background:#fff;border:1.1px solid #626262"></div>
<svg class="a" style="left:29px;top:693.6999999999999px" width="12" height="13"><use href="#chk"/></svg>
<svg class="a" style="left:43px;top:693.1999999999999px" width="13" height="14"><use href="#pencil"/></svg>
<div class="a" style="left:61.50px;top:694.62px;font-size:12.5px;line-height:12.5px;color:#444;transform:scaleX(0.8785);transform-origin:0 0;">Workflow#120124 1507 45 6 (Changed): Please review</div>
<div class="a" style="left:405.41px;top:694.62px;font-size:12.5px;line-height:12.5px;color:#444;transform:scaleX(0.8720);transform-origin:100% 0;">1/24/2012 02:23 PM</div>
<div class="a" style="left:572.30px;top:694.62px;font-size:12.5px;line-height:12.5px;color:#444;transform:scaleX(0.8220);transform-origin:0 0;">00001221.MSG</div>
<div class="a" style="left:858.89px;top:694.62px;font-size:12.5px;line-height:12.5px;color:#444;transform:scaleX(0.8950);transform-origin:100% 0;">1/24/2012</div>
<svg width="0" height="0" style="position:absolute"><defs>
<symbol id="hat" viewBox="0 0 9 16"><path d="M1 3.5 C1 1 8 1 8 3.5 L8.5 5 H0.5Z" fill="#3a2a22"/><ellipse cx="4.5" cy="7" rx="2.6" ry="2.4" fill="#e8d8c0"/><path d="M0.8 15.5 C0.8 11 2 9.8 4.5 9.8 C7 9.8 8.2 11 8.2 15.5Z" fill="#d8c6a8"/><path d="M4.5 10 V15" stroke="#fff" stroke-width="1"/></symbol>
<symbol id="star" viewBox="0 0 13 13"><path d="M6.5 0.5 L8.2 4.6 L12.6 4.9 L9.2 7.7 L10.3 12.2 L6.5 9.8 L2.7 12.2 L3.8 7.7 L0.4 4.9 L4.8 4.6Z" fill="#de7aa0"/></symbol>
<symbol id="flag" viewBox="0 0 11 14"><path d="M1.5 0.5 V13.5" stroke="#666" stroke-width="2"/><path d="M3 1 H10 V7.5 H3Z" fill="#6a6a6a"/></symbol>
<symbol id="person" viewBox="0 0 10 15"><circle cx="5" cy="3.8" r="3" fill="#e0c0a8"/><path d="M2 3 C2 0.3 8 0.3 8 3Z" fill="#5a4030"/><path d="M0.5 14.5 C0.5 9.5 2 8 5 8 C8 8 9.5 9.5 9.5 14.5Z" fill="#5a5a5a"/><path d="M4.2 8.5 L5 12 L5.8 8.5Z" fill="#fff"/></symbol>
</defs></svg>
<svg class="a" style="left:721px;top:208px" width="9" height="16"><use href="#hat"/></svg>
<svg class="a" style="left:719.5px;top:327px" width="13" height="13"><use href="#star"/></svg>
<svg class="a" style="left:719.5px;top:427px" width="11" height="14"><use href="#flag"/></svg>
<svg class="a" style="left:720.5px;top:455px" width="10" height="15"><use href="#person"/></svg>
<svg class="a" style="left:526.5px;top:324.5px" width="10" height="16"><use href="#pagesm"/></svg>
<div class="a" style="left:552.40px;top:328.62px;font-size:12.5px;line-height:12.5px;color:#383838;transform:scaleX(0.7335);transform-origin:0 0;">5</div>
<svg class="a" style="left:59.5px;top:354.5px" width="11" height="14"><use href="#notes"/></svg>
<div class="a" style="left:72.50px;top:356.29px;font-size:11px;line-height:11px;color:#505050;transform:scaleX(0.8782);transform-origin:0 0;">ENA Sales agreement, Summer Index included</div>
<div class="a" style="left:72.50px;top:375.09px;font-size:11px;line-height:11px;color:#505050;transform:scaleX(0.9144);transform-origin:0 0;">ver 4 opposing counsel edits</div>
<div class="a" style="left:72.50px;top:391.69px;font-size:11px;line-height:11px;color:#505050;transform:scaleX(0.9203);transform-origin:0 0;">ver6</div>
<svg class="a" style="left:59.5px;top:484px" width="11" height="14"><use href="#notes"/></svg>
<div class="a" style="left:72.50px;top:485.99px;font-size:11px;line-height:11px;color:#505050;transform:scaleX(0.9236);transform-origin:0 0;">Sample document supplied by 3rd party for review</div>
<div class="a" style="left:531.5px;top:262.5px;width:378px;height:17px;background:#5b9cee;"></div>
<div class="a" style="left:866.77px;top:271.82px;font-size:12.5px;line-height:12.5px;color:#444;transform:scaleX(0.8950);transform-origin:100% 0;opacity:0.35">7/8/2011</div>
<div class="a" style="left:534.60px;top:264.97px;font-size:11.5px;line-height:11.5px;color:#d9e8fb;transform:scaleX(0.8350);transform-origin:0 0;">Sort by Date Favorited (New-&gt;Old)</div>
<div class="a" style="left:519px;top:264px;width:10px;height:13px;border-radius:5px;background:#fbf1c8"></div>
<div class="a" style="left:521.40px;top:266.24px;font-size:10px;line-height:10px;color:#6a5420;transform:scaleX(1.0067);transform-origin:0 0;">3</div>
<svg class="a" style="left:558px;top:265px" width="12" height="21" viewBox="0 0 12 21"><path d="M1 1 V16.5 L4.6 13.2 L7.2 19.5 L9.5 18.5 L7 12.3 L11.5 12.3Z" fill="#fff" stroke="#1a1a2a" stroke-width="1.2" stroke-linejoin="round"/></svg>
<div class="a" style="left:988px;top:204px;width:15px;height:500px;background:#ececec;"></div>
<div class="a" style="left:988px;top:204px;width:14px;height:18px;background:#f6f6f6;"></div>
<svg class="a" style="left:991.5px;top:212px" width="8" height="6" viewBox="0 0 8 6"><path d="M1 5 L4 1.5 L7 5" fill="none" stroke="#444" stroke-width="1.6"/></svg>
<div class="a" style="left:988.8px;top:222px;width:12.4px;height:401.5px;background:#c8c8c8;"></div>
<svg class="a" style="left:991px;top:691px" width="8" height="6" viewBox="0 0 8 6"><path d="M1 1 L4 4.5 L7 1" fill="none" stroke="#444" stroke-width="1.6"/></svg>
<div class="a" style="left:1001px;top:204px;width:2.5px;height:516px;background:#a8a8a8;"></div>
<div class="a" style="left:1004px;top:176px;width:20px;height:544px;background:#fdfdfd;"></div>
<svg class="a" style="left:1010px;top:182px" width="8" height="11" viewBox="0 0 8 11"><path d="M1.5 1 L6 5.5 L1.5 10" fill="none" stroke="#4e6688" stroke-width="2.2"/></svg>
<div class="a" style="left:1021px;top:201px;transform:rotate(90deg);transform-origin:0 0;font-size:12px;line-height:12px;color:#222">Hide View</div>
<div class="a" style="left:1003.5px;top:262.8px;width:20.5px;height:1.6px;background:#666;"></div>
<div class="a" style="left:1004px;top:264px;width:18px;height:201.5px;border-right:1.5px solid #777;border-bottom:1.5px solid #555;background:#fdfdfd"></div>
<svg class="a" style="left:1007px;top:271px" width="14" height="15" viewBox="0 0 14 15"><circle cx="5" cy="5" r="3.8" fill="#fff" stroke="#777" stroke-width="1.3"/><path d="M8 8 L12.5 13" stroke="#d8a020" stroke-width="2.4"/></svg>
<div class="a" style="left:1020.5px;top:290px;transform:rotate(90deg) scaleX(0.99);transform-origin:0 0;font-size:12px;line-height:12px;color:#333">View: 2001 natural gas forecast</div>
<div class="a" style="left:10px;top:704px;width:993px;height:16px;background:#fbfbfb;"></div>
<div class="a" style="left:10px;top:703.2px;width:993px;height:1.6px;background:#4a4a4a;"></div>
<svg class="a" style="left:28px;top:711px" width="11" height="9" viewBox="0 0 11 9"><path d="M1.5 1.5 L5.5 6 L9.5 1.5" fill="none" stroke="#4e6688" stroke-width="2.2"/></svg>
<div class="a" style="left:51px;top:705px;width:240px;height:15px;background:#eeeeee;"></div>
<div class="a" style="left:50.5px;top:705px;width:1.5px;height:15px;background:#6a6a6a;"></div>
<div class="a" style="left:106px;top:705px;width:1.5px;height:15px;background:#6a6a6a;"></div>
<div class="a" style="left:162px;top:705px;width:1.5px;height:15px;background:#6a6a6a;"></div>
<div class="a" style="left:219.5px;top:705px;width:1.5px;height:15px;background:#6a6a6a;"></div>
<div class="a" style="left:290px;top:705px;width:1.5px;height:15px;background:#6a6a6a;"></div>
<svg class="a" style="left:55px;top:707px" width="11" height="13" viewBox="0 0 11 13"><path d="M0.5 0.5 H10.5 V2.5 L6.8 6 V13 H4.2 V6 L0.5 2.5Z" fill="#4e6d96"/></svg>
<div class="a" style="left:71.00px;top:708.77px;font-size:11.5px;line-height:11.5px;color:#777;transform:scaleX(0.8623);transform-origin:0 0;">Filters</div>
<svg class="a" style="left:111px;top:707px" width="11" height="13" viewBox="0 0 11 13"><rect x="0.6" y="0.6" width="9.5" height="12" fill="#fff" stroke="#666" stroke-width="1.1"/><path d="M2.5 3.5 H8 M2.5 6 H8 M2.5 8.5 H8" stroke="#777" stroke-width="1"/><rect x="5" y="7" width="4" height="5" fill="#444"/></svg>
<div class="a" style="left:126.40px;top:708.77px;font-size:11.5px;line-height:11.5px;color:#777;transform:scaleX(0.8372);transform-origin:0 0;">Profile</div>
<svg class="a" style="left:168px;top:706px" width="11" height="14" viewBox="0 0 11 14"><rect x="0.5" y="1" width="10" height="13" fill="#efdca0"/><rect x="4" y="0" width="3" height="3" fill="#333"/><path d="M5.5 4 V13" stroke="#c23" stroke-width="1" stroke-dasharray="1.5 1.5"/></svg>
<div class="a" style="left:184.00px;top:708.77px;font-size:11.5px;line-height:11.5px;color:#777;transform:scaleX(0.8073);transform-origin:0 0;">Project</div>
<svg class="a" style="left:224px;top:706px" width="12" height="14" viewBox="0 0 12 14"><path d="M2.5 0.7 H8 L11 3.7 V14 H2.5Z" fill="#fff" stroke="#777" stroke-width="1.1"/><path d="M0.8 7.5 C0.8 5 5 5 5 7.5 C5 10 0.8 10 0.8 12.5" fill="none" stroke="#777" stroke-width="1.2"/></svg>
<div class="a" style="left:241.00px;top:708.77px;font-size:11.5px;line-height:11.5px;color:#777;transform:scaleX(0.8675);transform-origin:0 0;">Relations</div>
<div class="a" style="left:297.10px;top:709.42px;font-size:12.5px;line-height:12.5px;color:#262626;transform:scaleX(0.7446);transform-origin:0 0;">Client Files\00060\0140</div>
<div class="a" style="left:957.90px;top:709.84px;font-size:12px;line-height:12px;color:#333;transform:scaleX(0.8124);transform-origin:0 0;">File: 1/15</div>
<div class="a" style="left:1003px;top:704px;width:1px;height:16px;background:#aaa;"></div>
</body></html>
